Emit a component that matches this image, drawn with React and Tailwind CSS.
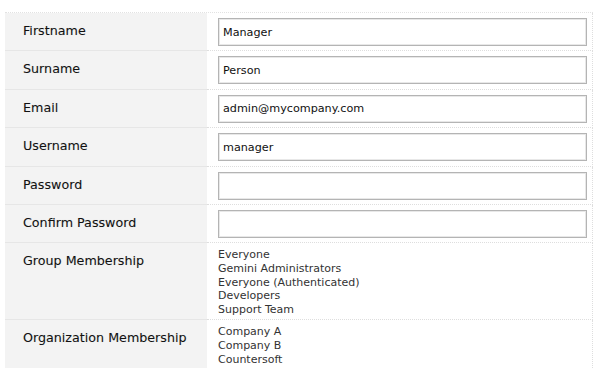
const fields = [
  { label: "Firstname", value: "Manager" },
  { label: "Surname", value: "Person" },
  { label: "Email", value: "admin@mycompany.com" },
  { label: "Username", value: "manager" },
  { label: "Password", value: "", type: "password" },
  { label: "Confirm Password", value: "", type: "password" },
];

const groups = [
  "Everyone",
  "Gemini Administrators",
  "Everyone (Authenticated)",
  "Developers",
  "Support Team",
];

const orgs = ["Company A", "Company B", "Countersoft"];

const Label = ({ children }) => (
  <div className="w-[202px] shrink-0 bg-[#f3f3f3] border-b border-[#e6e6e6] pl-[18px] pt-[8px] text-[12.7px] text-[#111] [text-shadow:0_0_1px_rgba(0,0,0,0.15)]">
    {children}
  </div>
);

export default function App() {
  return (
    <div className="w-[594px] h-[368px] overflow-hidden bg-white font-['DejaVu_Sans',Verdana,sans-serif]">
      <div className="ml-[5px] mt-[12px] w-[588px] border-t border-dotted border-[#e2e2e2]">
        {fields.map((f) => (
          <div key={f.label} className="flex h-[38.4px]">
            <Label>{f.label}</Label>
            <div className="grow border-b border-r border-dotted border-[#dedede] pl-[11px] pr-[5px] pt-[5px]">
              <input
                type={f.type || "text"}
                defaultValue={f.value}
                className="w-full h-[28px] border border-[#b4b4b4] shadow-[inset_0_0_0_1px_#e8e8e8] px-[4px] text-[11.2px] text-[#111] outline-none font-['DejaVu_Sans',Verdana,sans-serif]"
              />
            </div>
          </div>
        ))}
        <div className="flex h-[77px]">
          <Label>Group Membership</Label>
          <div className="grow border-b border-r border-dotted border-[#dedede] pl-[11px] pt-[5px] text-[11px] leading-[13.6px] text-[#333]">
            {groups.map((g) => (
              <div key={g}>{g}</div>
            ))}
          </div>
        </div>
        <div className="flex h-[60px]">
          <Label>Organization Membership</Label>
          <div className="grow border-r border-dotted border-[#dedede] pl-[11px] pt-[5px] text-[11px] leading-[13.6px] text-[#333]">
            {orgs.map((o) => (
              <div key={o}>{o}</div>
            ))}
          </div>
        </div>
      </div>
    </div>
  );
}
